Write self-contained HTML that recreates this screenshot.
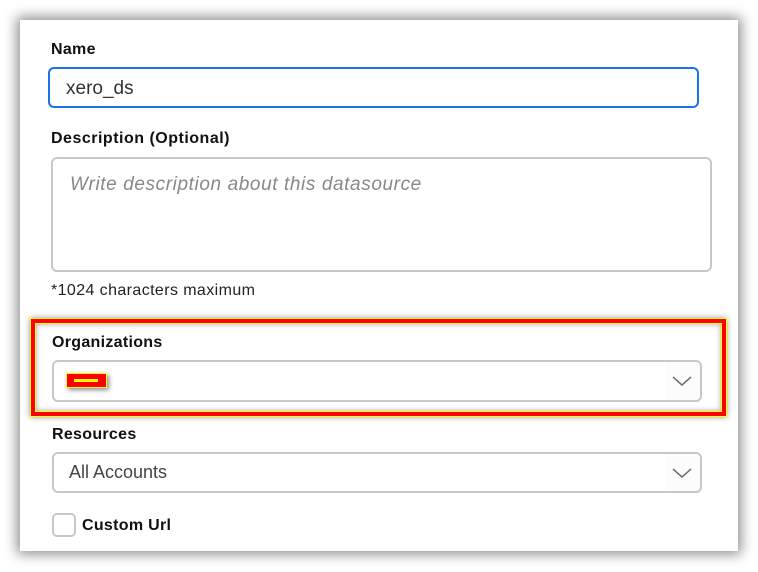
<!DOCTYPE html>
<html><head><style>
body{margin:0;width:758px;height:572px;background:#fff;position:relative;overflow:hidden;font-family:"Liberation Sans",sans-serif;}
.panel{position:absolute;left:20px;top:20px;width:718px;height:531px;background:#fff;box-shadow:0 0 12px 3px rgba(0,0,0,0.45);}
.lbl{position:absolute;font-weight:bold;font-size:16px;color:#111;letter-spacing:0.3px;}
.box{position:absolute;box-sizing:border-box;border:2px solid #c8c8c8;border-radius:6px;background:#fff;}
.txt{position:absolute;font-size:18px;color:#444;}
.chev{position:absolute;right:0;top:0;bottom:0;width:34px;background:#fcfcfc;border-radius:0 5px 5px 0;}
.chev svg{position:absolute;left:6px;top:50%;margin-top:-6px;}
</style></head><body>
<div class="panel"></div>
<div class="lbl" style="left:51px;top:41px">Name</div>
<div class="box" style="left:48px;top:67px;width:651px;height:41px;border-color:#1a73e8;"></div>
<div class="txt" style="left:66px;top:78px;color:#333;font-size:19px">xero_ds</div>
<div class="lbl" style="left:51px;top:130px;letter-spacing:0.5px">Description (Optional)</div>
<div class="box" style="left:51px;top:157px;width:661px;height:115px;"></div>
<div class="txt" style="left:70px;top:174px;color:#888;font-style:italic;font-size:19px;letter-spacing:0.6px">Write description about this datasource</div>
<div style="position:absolute;left:51px;top:282px;font-size:16px;color:#222;letter-spacing:0.4px">*1024 characters maximum</div>

<div style="position:absolute;left:30px;top:318px;width:697px;height:99px;box-sizing:border-box;border:1px solid #ff0;box-shadow:0 0 6px rgba(0,0,0,0.4);"></div>
<div style="position:absolute;left:31px;top:319px;width:695px;height:97px;box-sizing:border-box;border:4px solid #f00;"></div>
<div style="position:absolute;left:35px;top:323px;width:687px;height:89px;box-sizing:border-box;border:1px solid #ff0;box-shadow:inset 0 0 6px rgba(0,0,0,0.35);"></div>
<div class="lbl" style="left:52px;top:334px">Organizations</div>
<div class="box" style="left:52px;top:360px;width:650px;height:42px;"><div class="chev"><svg width="20" height="12"><path d="M1 2 L10 10 L19 2" fill="none" stroke="#666" stroke-width="1.5"/></svg></div></div>
<div style="position:absolute;left:66px;top:373px;width:41px;height:15px;box-sizing:border-box;background:#f00;border:1px solid #ff0;box-shadow:2px 2px 5px rgba(0,0,0,0.45);"><div style="position:absolute;left:7px;top:5px;width:24px;height:3px;background:#ff0"></div></div>

<div class="lbl" style="left:52px;top:426px">Resources</div>
<div class="box" style="left:52px;top:452px;width:650px;height:41px;"><div class="chev"><svg width="20" height="12"><path d="M1 2 L10 10 L19 2" fill="none" stroke="#666" stroke-width="1.5"/></svg></div></div>
<div class="txt" style="left:69px;top:462px;font-size:18px">All Accounts</div>
<div style="position:absolute;left:52px;top:513px;width:24px;height:24px;box-sizing:border-box;border:2px solid #c8c8c8;border-radius:5px"></div>
<div class="lbl" style="left:82px;top:517px">Custom Url</div>
</body></html>
